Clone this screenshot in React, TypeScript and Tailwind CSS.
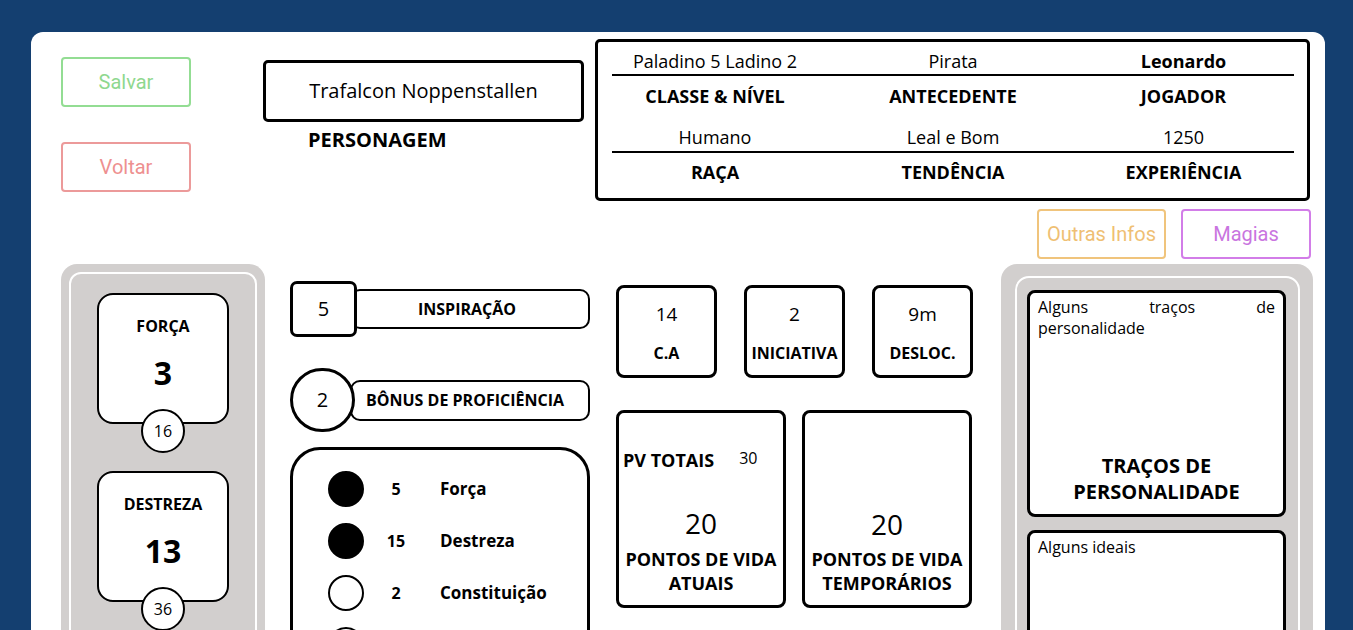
import React from "react";

const sheet = { fontFamily: '"Open Sans", "Noto Sans", sans-serif' };
const roboto = { fontFamily: 'Roboto, "Noto Sans", sans-serif' };

function AttrCard({ label, value, mod, first }: { label: string; value: string; mod: string; first?: boolean }) {
  return (
    <div
      className={`relative w-[132px] h-[131px] shrink-0 rounded-[16px] border-2 border-black bg-white flex flex-col items-center ${first ? "" : "mt-[47px]"}`}
    >
      <div className="mt-[21px] h-[20px] leading-[20px] text-[16px] font-bold">{label}</div>
      <div className="mt-[17px] h-[40px] leading-[40px] text-[32px] font-bold">{value}</div>
      <div className="absolute left-1/2 -translate-x-1/2 bottom-[-31px] w-[44px] h-[44px] rounded-full border-2 border-black bg-white flex items-center justify-center text-[16px]">
        {mod}
      </div>
    </div>
  );
}

function SaveRow({ filled, num, label }: { filled: boolean; num: string; label: string }) {
  return (
    <div className="flex items-center h-[36px]">
      <div
        className={`w-[36px] h-[36px] rounded-full border-2 border-black ${filled ? "bg-black" : "bg-white"}`}
      />
      <div className="ml-[12px] w-[40px] text-center text-[16px] font-bold">{num}</div>
      <div className="ml-[24px] text-[17px] font-bold">{label}</div>
    </div>
  );
}

function StatBox({ value, label }: { value: string; label: string }) {
  return (
    <div className="w-[101px] h-[93px] border-[3px] border-black rounded-[8px] flex flex-col items-center">
      <div className="mt-[14px] h-[24px] leading-[24px] text-[19px]">{value}</div>
      <div className="mt-[16px] h-[22px] leading-[22px] text-[16px] font-bold">{label}</div>
    </div>
  );
}

export default function App() {
  return (
    <div className="h-screen overflow-hidden bg-[#143f70] pt-[32px] pl-[31px] pr-[28px]" style={sheet}>
      <div className="bg-white rounded-[12px] text-black pb-[60px]">
        {/* top row */}
        <div className="flex pl-[30px]">
          <div className="flex flex-col w-[130px] pt-[25px] gap-[35px]" style={roboto}>
            <button className="h-[50px] border-2 border-[#93dd93] rounded-[4px] text-[20px] text-[#8fd88f] bg-white">
              Salvar
            </button>
            <button className="h-[50px] border-2 border-[#ec9a9a] rounded-[4px] text-[20px] text-[#ee9090] bg-white">
              Voltar
            </button>
          </div>

          <div className="ml-[72px] pt-[28px] w-[321px]">
            <div className="h-[62px] border-[3px] border-black rounded-[5px] flex items-center justify-center text-[20px]">
              Trafalcon Noppenstallen
            </div>
            <div className="pl-[45px] mt-[5px] font-bold text-[20px] leading-[26px]">PERSONAGEM</div>
          </div>

          <div className="ml-[11px] pt-[7px] w-[716px]">
            <div className="w-[715px] h-[162px] border-[3px] border-black rounded-[5px] pl-[14px] pr-[13px] pt-[8px]">
              <div className="grid grid-cols-[206px_270px_205px] text-center text-[18px] h-[22px] leading-[22px]">
                <div>Paladino 5 Ladino 2</div>
                <div>Pirata</div>
                <div className="font-bold pr-[14px]">Leonardo</div>
              </div>
              <div className="mt-[2px] h-[2px] bg-black" />
              <div className="mt-[7px] grid grid-cols-[206px_270px_205px] text-center text-[18px] font-bold h-[26px] leading-[26px]">
                <div>CLASSE &amp; NÍVEL</div>
                <div>ANTECEDENTE</div>
                <div className="pr-[14px]">JOGADOR</div>
              </div>
              <div className="mt-[17px] grid grid-cols-[206px_270px_205px] text-center text-[18px] h-[22px] leading-[22px]">
                <div>Humano</div>
                <div>Leal e Bom</div>
                <div className="pr-[14px]">1250</div>
              </div>
              <div className="mt-[3px] h-[2px] bg-black" />
              <div className="mt-[6px] grid grid-cols-[206px_270px_205px] text-center text-[18px] font-bold h-[26px] leading-[26px]">
                <div>RAÇA</div>
                <div>TENDÊNCIA</div>
                <div className="pr-[14px]">EXPERIÊNCIA</div>
              </div>
            </div>
            <div className="mt-[8px] flex justify-end gap-[15px]" style={roboto}>
              <button className="w-[129px] h-[50px] border-2 border-[#f0c47c] rounded-[4px] text-[20px] text-[#efbf74] bg-white">
                Outras Infos
              </button>
              <button className="w-[130px] h-[50px] border-2 border-[#d27de8] rounded-[4px] text-[20px] text-[#c975e0] bg-white">
                Magias
              </button>
            </div>
          </div>
        </div>

        {/* lower row */}
        <div className="flex items-start pl-[30px] mt-[5px]">
          {/* attributes */}
          <div className="w-[204px] bg-[#d2cfce] rounded-[16px] p-[8px]">
            <div className="border-2 border-white rounded-[12px] flex flex-col items-center pt-[19px] pb-[48px]">
              <AttrCard label="FORÇA" value="3" mod="16" first />
              <AttrCard label="DESTREZA" value="13" mod="36" />
              <AttrCard label="CONSTITUIÇÃO" value="2" mod="14" />
            </div>
          </div>

          {/* column 1 */}
          <div className="ml-[25px] w-[300px] pt-[17px]">
            <div className="flex items-center h-[56px]">
              <div className="relative z-10 w-[67px] h-[56px] shrink-0 border-[3px] border-black rounded-[7px] bg-white flex items-center justify-center text-[20px]">
                5
              </div>
              <div className="ml-[-7px] flex-1 h-[40px] border-2 border-black rounded-[10px] flex items-center justify-center pl-[4px] pr-[10px] text-[16px] font-bold">
                INSPIRAÇÃO
              </div>
            </div>
            <div className="mt-[31px] flex items-center h-[64px]">
              <div className="relative z-10 w-[65px] h-[64px] shrink-0 border-[3px] border-black rounded-full bg-white flex items-center justify-center text-[20px]">
                2
              </div>
              <div className="ml-[-5px] flex-1 h-[41px] border-2 border-black rounded-[10px] flex items-center justify-center pl-[2px] pr-[12px] text-[16px] font-bold">
                BÔNUS DE PROFICIÊNCIA
              </div>
            </div>
            <div className="mt-[15px] border-[3px] border-black rounded-[30px] pt-[21px] pb-[24px] pl-[35px] flex flex-col gap-[16px]">
              <SaveRow filled num="5" label="Força" />
              <SaveRow filled num="15" label="Destreza" />
              <SaveRow filled={false} num="2" label="Constituição" />
              <SaveRow filled={false} num="1" label="Inteligência" />
              <SaveRow filled={false} num="3" label="Sabedoria" />
            </div>
          </div>

          {/* column 2 */}
          <div className="ml-[26px] w-[357px] pt-[21px]">
            <div className="flex gap-[27px]">
              <StatBox value="14" label="C.A" />
              <StatBox value="2" label="INICIATIVA" />
              <StatBox value="9m" label="DESLOC." />
            </div>
            <div className="mt-[32px] flex gap-[16px]">
              <div className="w-[170px] h-[198px] border-[3px] border-black rounded-[8px] flex flex-col">
                <div className="pt-[35px] pl-[4px] flex items-center">
                  <span className="text-[18px] font-bold leading-[24px]">PV TOTAIS</span>
                  <span className="ml-[25px] text-[16px] leading-[24px] -translate-y-[2px]">30</span>
                </div>
                <div className="mt-auto pb-[10px] flex flex-col items-center">
                  <div className="text-[28px] leading-[36px]">20</div>
                  <div className="mt-[6px] text-[18px] font-bold leading-[24px] text-center">
                    PONTOS DE VIDA
                    <br />
                    ATUAIS
                  </div>
                </div>
              </div>
              <div className="w-[170px] h-[198px] border-[3px] border-black rounded-[8px] flex flex-col">
                <div className="mt-auto pb-[10px] flex flex-col items-center">
                  <div className="text-[28px] leading-[36px]">20</div>
                  <div className="mt-[5px] text-[18px] font-bold leading-[24px] text-center">
                    PONTOS DE VIDA
                    <br />
                    TEMPORÁRIOS
                  </div>
                </div>
              </div>
            </div>
          </div>

          {/* right panel */}
          <div className="ml-[28px] w-[312px] bg-[#d2cfce] rounded-[16px] pt-[12px] pl-[14px] pr-[13px] pb-[12px]">
            <div className="border-2 border-white rounded-[14px] pl-[10px] pr-[12px] pt-[12px] pb-[12px]">
              <div className="h-[227px] border-[3px] border-black rounded-[8px] bg-white flex flex-col">
                <div className="px-[8px] pt-[4px] text-[16px] leading-[21px]">
                  <div className="flex justify-between">
                    <span>Alguns</span>
                    <span>traços</span>
                    <span>de</span>
                  </div>
                  <div>personalidade</div>
                </div>
                <div className="mt-auto pb-[9px] text-center text-[20px] font-bold leading-[26px]">
                  TRAÇOS DE
                  <br />
                  PERSONALIDADE
                </div>
              </div>
              <div className="mt-[13px] h-[227px] border-[3px] border-black rounded-[8px] bg-white flex flex-col">
                <div className="px-[8px] pt-[4px] text-[16px] leading-[21px]">Alguns ideais</div>
                <div className="mt-auto pb-[9px] text-center text-[20px] font-bold leading-[26px]">IDEAIS</div>
              </div>
            </div>
          </div>
        </div>
      </div>
    </div>
  );
}
